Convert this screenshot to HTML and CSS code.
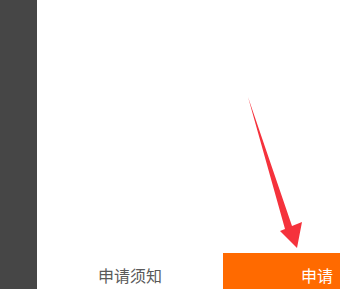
FILE: index.html
```html
<!DOCTYPE html>
<html lang="zh-CN">
<head>
<meta charset="utf-8">
<title>申请</title>
<link rel="stylesheet" href="styles.css">
</head>
<body>
<div class="page">
  <aside class="side"></aside>
  <main class="main">
    <div class="content"></div>
    <div class="bar">
      <div class="notice">申请须知</div>
      <div class="apply">申请</div>
    </div>
  </main>
  <svg class="arrow" width="340" height="289" viewBox="0 0 340 289">
    <polygon fill="#f5323c" points="248,97 285,229 280,231 297,248 302,222 292,226"/>
  </svg>
</div>
</body>
</html>
```
FILE: styles.css
```css
html, body {
  margin: 0;
  padding: 0;
  width: 340px;
  height: 289px;
  overflow: hidden;
  background: #fff;
  font-family: "Noto Sans CJK SC", "Noto Sans", sans-serif;
}
.page {
  position: relative;
  display: flex;
  width: 340px;
  height: 297px;
}
.side {
  width: 37px;
  flex: none;
  background: #464646;
}
.main {
  flex: 1;
  display: flex;
  flex-direction: column;
}
.content {
  flex: 1;
  background: #fff;
}
.bar {
  height: 44px;
  flex: none;
  display: flex;
}
.notice {
  width: 186px;
  display: flex;
  align-items: center;
  justify-content: center;
  font-size: 16px;
  color: #5a5a5a;
}
.apply {
  flex: 1;
  background: #ff6a00;
  color: #fff;
  font-size: 16px;
  display: flex;
  align-items: center;
  padding-left: 78px;
}
.arrow {
  position: absolute;
  left: 0;
  top: 0;
}
```
